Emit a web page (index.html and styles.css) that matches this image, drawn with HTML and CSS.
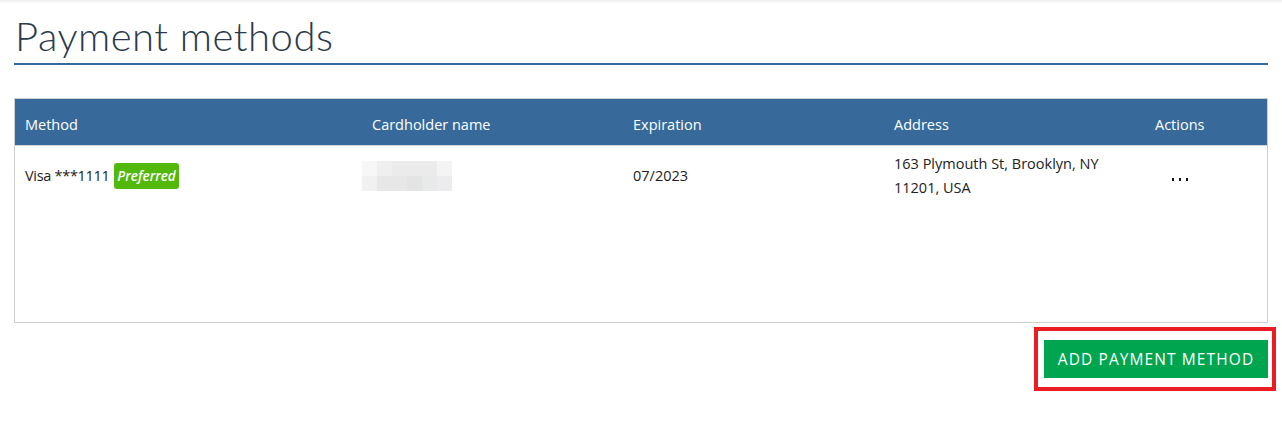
FILE: index.html
```html
<!DOCTYPE html>
<html>
<head>
<meta charset="utf-8">
<link rel="stylesheet" href="styles.css">
</head>
<body>
<div class="topshadow"></div>
<main class="page">
  <h1 class="title">Payment methods</h1>
  <div class="tablebox">
    <table class="methods">
      <thead>
        <tr>
          <th class="c1">Method</th>
          <th class="c2">Cardholder name</th>
          <th class="c3">Expiration</th>
          <th class="c4">Address</th>
          <th class="c5">Actions</th>
        </tr>
      </thead>
      <tbody>
        <tr>
          <td><span class="visa">Visa ***1111</span> <span class="badge">Preferred</span></td>
          <td><div class="blur"><i class="p1"></i><i class="p2"></i><i class="p3"></i><i class="p3"></i><i class="p3"></i><i class="p4"></i><i class="p5"></i><i class="p6"></i><i class="p6"></i><i class="p7"></i><i class="p8"></i><i class="p9"></i></div></td>
          <td>07/2023</td>
          <td class="addr">163 Plymouth St, Brooklyn, NY<br>11201, USA</td>
          <td><span class="dots"><b></b><b></b><b></b></span></td>
        </tr>
      </tbody>
    </table>
  </div>
  <div class="actions">
    <div class="highlight">
      <button class="addbtn">ADD PAYMENT METHOD</button>
    </div>
  </div>
</main>
</body>
</html>
```
FILE: styles.css
```css
* { box-sizing: border-box; }
html, body { margin: 0; padding: 0; background: #fff; }
body { font-family: "Open Sans", "Noto Sans", sans-serif; color: #222; }
.topshadow { height: 4px; background: linear-gradient(#f0f0f0, #fff); }
.page { padding: 0 14px; }
.title {
  margin: 0;
  padding: 8px 0 0 1px;
  height: 61px;
  font-family: "Lato", sans-serif;
  font-weight: 300;
  font-size: 40px;
  line-height: 48px;
  letter-spacing: 0.5px;
  color: #2b3a4a;
  border-bottom: 2px solid #36699b;
}
.tablebox {
  margin-top: 33px;
  border: 1px solid #cfcfcf;
  height: 225px;
}
.methods { width: 100%; border-collapse: collapse; table-layout: fixed; font-size: 14.5px; }
.methods th {
  background: #376a9b;
  color: #fff;
  font-weight: 400;
  text-align: left;
  height: 46px;
  padding: 6px 10px 0;
  border-bottom: 1px solid #d6d6d6;
}
.c1 { width: 347px; }
.c2 { width: 261px; }
.c3 { width: 261px; }
.c4 { width: 261px; }
.methods td { padding: 6px 10px; height: 62px; vertical-align: middle; color: #222; line-height: 24px; }
.visa { letter-spacing: -0.3px; }
.badge {
  display: inline-block;
  background: #52b80c;
  color: #fff;
  font-style: italic;
  font-weight: 600;
  font-size: 13.5px;
  border-radius: 3px;
  padding: 0 3px;
  line-height: 26px;
  margin-left: 1px;
}
.blur { display: grid; grid-template-columns: repeat(6, 15px); grid-auto-rows: 15px; margin-left: -10px; }
.blur i { display: block; }
.p1 { background: #f7f7f7; } .p2 { background: #efefef; } .p3 { background: #ebebeb; }
.p4 { background: #f4f4f4; } .p5 { background: #f1f1f1; } .p6 { background: #e7e7e7; }
.p7 { background: #e4e4e4; } .p8 { background: #e8e9e9; } .p9 { background: #ececee; }
.dots { display: inline-flex; gap: 5px; margin-left: 17px; }
.dots b { width: 2px; height: 3px; background: #111; display: block; }
.actions { display: flex; justify-content: flex-end; margin-right: -8px; margin-top: 4px; }
.highlight { border: 4px solid #ec1c24; padding: 9px 4px 9px 6px; }
.addbtn {
  display: block;
  width: 224px;
  height: 38px;
  background: #00a550;
  color: #fff;
  border: none;
  font-family: "Open Sans", sans-serif;
  font-size: 15.5px;
  font-weight: 500;
  letter-spacing: 1.1px;
  padding: 0;
}
```
